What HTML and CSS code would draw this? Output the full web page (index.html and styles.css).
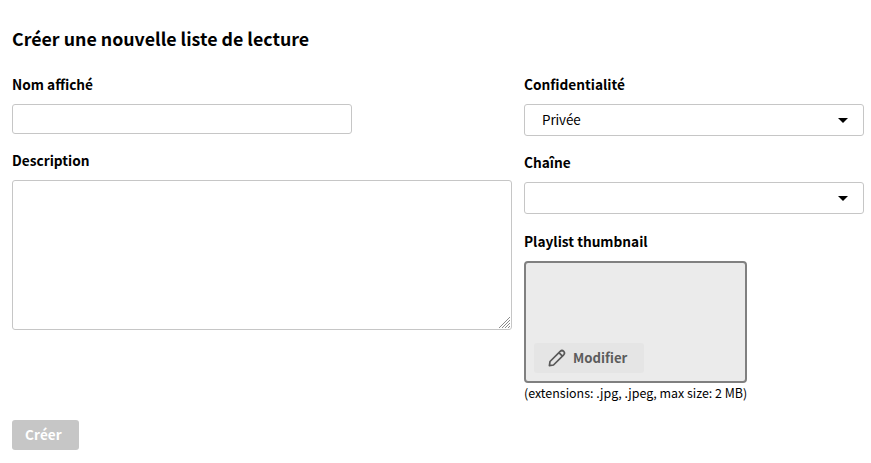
FILE: index.html
```html
<!DOCTYPE html>
<html lang="fr">
<head>
<meta charset="utf-8">
<title>Créer une nouvelle liste de lecture</title>
<link rel="stylesheet" href="styles.css">
</head>
<body>
<form class="playlist-form">
  <h1 class="title">Créer une nouvelle liste de lecture</h1>
  <div class="columns">
    <div class="main-column">
      <label class="label" for="name">Nom affiché</label>
      <input class="text-input" id="name" type="text">
      <label class="label" for="description">Description</label>
      <div class="textarea-wrap">
        <textarea class="textarea" id="description"></textarea>
        <svg class="grip" width="11" height="11" viewBox="0 0 11 11" shape-rendering="crispEdges"><path d="M0 11L11 0M3 11L11 3M6 11L11 6M9 11L11 9"/></svg>
      </div>
    </div>
    <div class="side-column">
      <div class="label">Confidentialité</div>
      <div class="select"><span class="select-value">Privée</span><i class="caret"></i></div>
      <div class="label label-channel">Chaîne</div>
      <div class="select"><span class="select-value"></span><i class="caret"></i></div>
      <div class="label label-thumbnail">Playlist thumbnail</div>
      <div class="thumbnail">
        <div class="edit-button">
          <svg class="pencil" width="18" height="18" viewBox="0 0 18 18"><path d="M1.4 16.6L2 12.5L12.2 2.3Q14 .7 15.7 2.3Q17.3 4 15.7 5.8L5.5 16ZM10.9 3.6L14.4 7.1"/></svg>
          <span>Modifier</span>
        </div>
      </div>
      <div class="hint">(extensions: .jpg, .jpeg, max size: 2 MB)</div>
    </div>
  </div>
  <button class="submit" type="button" disabled>Créer</button>
</form>
</body>
</html>
```
FILE: styles.css
```css
* { box-sizing: border-box; }
body {
  margin: 0;
  background: #fff;
  color: #000;
  font-family: "Noto Sans CJK SC", sans-serif;
  font-size: 13.4px;
}
.playlist-form { padding: 24px 7px 0 12px; }
.title { margin: 0 0 18px; font-size: 17.8px; line-height: 28px; font-weight: 700; }
.columns { display: flex; gap: 12px; height: 350px; }
.main-column { width: 500px; }
.side-column { width: 340px; }
.label { display: block; height: 34px; font-size: 13.68px; line-height: 28px; font-weight: 700; }
.text-input {
  display: block;
  width: 340px;
  height: 30px;
  margin-bottom: 12px;
  border: 1px solid #c6c6c6;
  border-radius: 3px;
}
.textarea-wrap { position: relative; height: 150px; }
.textarea {
  display: block;
  width: 500px;
  height: 150px;
  border: 1px solid #c6c6c6;
  border-radius: 3px;
  resize: none;
}
.grip { position: absolute; right: 2px; bottom: 2px; fill: none; stroke: #8c8c8c; stroke-width: 1.4; }
.select {
  display: flex;
  align-items: flex-start;
  justify-content: space-between;
  height: 32px;
  padding: 0 15px 0 17px;
  border: 1px solid #c6c6c6;
  border-radius: 3px;
}
.select-value { line-height: 28px; letter-spacing: -.1px; }
.caret { margin-top: 13px; border: 5px solid transparent; border-top-color: #000; border-bottom: 0; }
.label-channel { margin-top: 12px; }
.label-thumbnail { margin-top: 12px; height: 35px; line-height: 30px; }
.thumbnail {
  display: flex;
  align-items: flex-end;
  width: 223px;
  height: 122px;
  padding: 8px;
  border: 2px solid #808080;
  border-radius: 4px;
  background: #ebebeb;
}
.edit-button {
  display: flex;
  align-items: flex-start;
  gap: 7px;
  width: 110px;
  height: 30px;
  padding-left: 14px;
  border-radius: 3px;
  background: #e5e5e5;
  color: #5c5c5c;
  font-size: 13.2px;
  font-weight: 700;
  line-height: 30px;
}
.pencil { margin-top: 6px; fill: none; stroke: #585858; stroke-width: 1.7; stroke-linejoin: round; }
.hint { font-size: 12.45px; line-height: 20px; white-space: nowrap; }
.submit {
  display: block;
  width: 67px;
  height: 30px;
  padding: 0 0 2px 13px;
  border: 0;
  border-radius: 3px;
  background: #c6c6c6;
  color: #fff;
  font: 700 13.5px/28px "Noto Sans CJK SC", sans-serif;
  letter-spacing: .15px;
  text-align: left;
}
```
